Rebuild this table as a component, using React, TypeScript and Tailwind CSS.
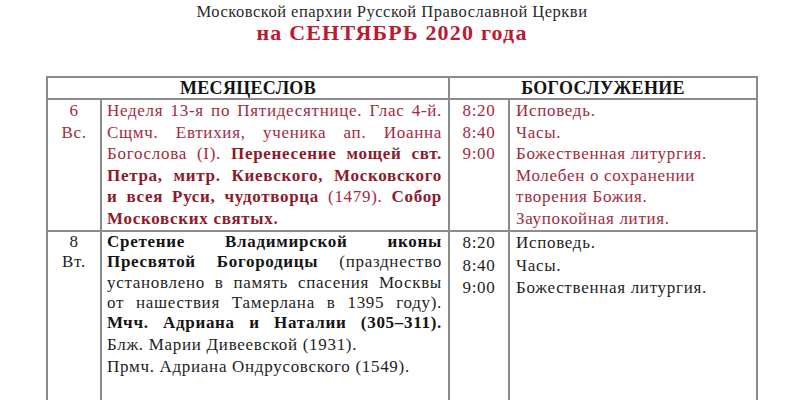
const crimson = "text-[#a32a3e]";

// each line is laid out by hand so the breaks match the printed sheet
const JLine = ({ children }: { children: React.ReactNode }) => (
  <div className="text-justify [text-align-last:justify]">{children}</div>
);

const Line = ({ children }: { children: React.ReactNode }) => <div>{children}</div>;

export default function App() {
  return (
    <div className="w-[796px] h-[400px] overflow-hidden bg-white font-['Liberation_Serif',serif] text-[#1c1c1c]">
      {/* Title */}
      <div className="h-[76px] pr-[12px] text-center">
        <div className="pt-[2px] text-[16.5px] leading-[20px] tracking-[0.5px] text-[#2a2a2a]">
          Московской епархии Русской Православной Церкви
        </div>
        <div className="-mt-[2px] text-[22px] leading-[26px] tracking-[1.2px] font-bold text-[#bb1a31]">
          на СЕНТЯБРЬ 2020 года
        </div>
      </div>

      {/* Table */}
      <div className="ml-[46px] w-[712px] border-2 border-b-0 border-[#8c8c8c]">
        <div className="grid grid-cols-[400px_1fr] border-b-2 border-[#8c8c8c] text-[18px] leading-[20px] tracking-[0.3px] font-bold text-[#141414]">
          <div className="text-center">МЕСЯЦЕСЛОВ</div>
          <div className="border-l-2 border-[#8c8c8c] text-center">БОГОСЛУЖЕНИЕ</div>
        </div>

        {/* Row 1 */}
        <div className={`grid grid-cols-[52px_348px_60px_1fr] border-b-2 border-[#8c8c8c] text-[17px] leading-[21.5px] tracking-[0.7px] ${crimson}`}>
          <div className="text-center">
            <div>6</div>
            <div>Вс.</div>
          </div>
          <div className="border-l-2 border-[#8c8c8c] pl-[5px] pr-[6px]">
            <JLine>Неделя 13-я по Пятидесятнице. Глас 4-й.</JLine>
            <JLine>Сщмч. Евтихия, ученика ап. Иоанна</JLine>
            <JLine>
              Богослова (I). <b className="text-[#8c1a2c]">Перенесение мощей свт.</b>
            </JLine>
            <JLine>
              <b className="text-[#8c1a2c]">Петра, митр. Киевского, Московского</b>
            </JLine>
            <JLine>
              <b className="text-[#8c1a2c]">и всея Руси, чудотворца</b> (1479).{" "}
              <b className="text-[#8c1a2c]">Собор</b>
            </JLine>
            <Line>
              <b className="text-[#8c1a2c]">Московских святых.</b>
            </Line>
          </div>
          <div className="border-l-2 border-[#8c8c8c] text-center">
            <div>8:20</div>
            <div>8:40</div>
            <div>9:00</div>
          </div>
          <div className="border-l-2 border-[#8c8c8c] pl-[6px] pb-[1px]">
            <Line>Исповедь.</Line>
            <Line>Часы.</Line>
            <Line>Божественная литургия.</Line>
            <Line>Молебен о сохранении</Line>
            <Line>творения Божия.</Line>
            <Line>Заупокойная лития.</Line>
          </div>
        </div>

        {/* Row 2 */}
        <div className="grid grid-cols-[52px_348px_60px_1fr] h-[180px] text-[17px] leading-[20.3px] tracking-[0.7px] text-[#1e1e1e]">
          <div className="text-center">
            <div>8</div>
            <div>Вт.</div>
          </div>
          <div className="border-l-2 border-[#8c8c8c] pl-[5px] pr-[6px]">
            <JLine>
              <b className="text-[#141414]">Сретение Владимирской иконы</b>
            </JLine>
            <JLine>
              <b className="text-[#141414]">Пресвятой Богородицы</b> (празднество
            </JLine>
            <JLine>установлено в память спасения Москвы</JLine>
            <JLine>от нашествия Тамерлана в 1395 году).</JLine>
            <JLine>
              <b className="text-[#141414]">Мчч. Адриана и Наталии (305–311).</b>
            </JLine>
            <div className="pt-[1px] leading-[21.5px]">
              <Line>Блж. Марии Дивеевской (1931).</Line>
              <Line>Прмч. Адриана Ондрусовского (1549).</Line>
            </div>
          </div>
          <div className="border-l-2 border-[#8c8c8c] text-center leading-[22.5px]">
            <div>8:20</div>
            <div>8:40</div>
            <div>9:00</div>
          </div>
          <div className="border-l-2 border-[#8c8c8c] pl-[6px] leading-[22.5px]">
            <Line>Исповедь.</Line>
            <Line>Часы.</Line>
            <Line>Божественная литургия.</Line>
          </div>
        </div>
      </div>
    </div>
  );
}
